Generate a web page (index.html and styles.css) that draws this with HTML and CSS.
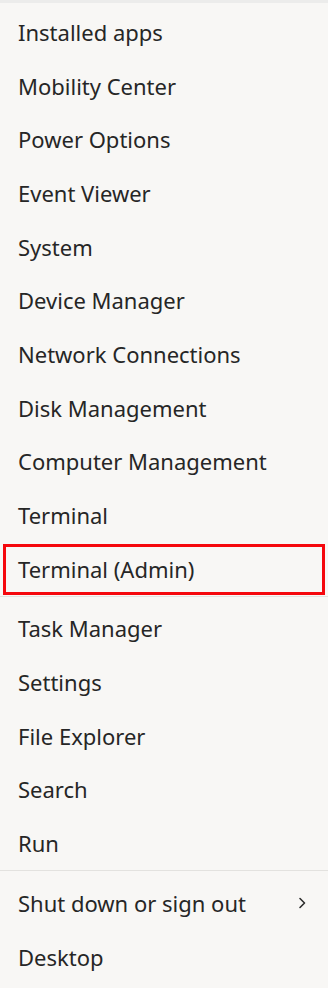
FILE: index.html
```html
<!doctype html>
<html lang="en">
  <head>
    <meta charset="UTF-8" />
    <meta name="viewport" content="width=device-width, initial-scale=1.0" />
    <title>Quick Link menu</title>
    <link rel="stylesheet" href="styles.css">
  </head>
  <body>
    <!-- Меню Win+X -->
    <div class="quick-menu">
      <div class="menu-item">Installed apps</div>
      <div class="menu-item">Mobility Center</div>
      <div class="menu-item">Power Options</div>
      <div class="menu-item">Event Viewer</div>
      <div class="menu-item">System</div>
      <div class="menu-item">Device Manager</div>
      <div class="menu-item">Network Connections</div>
      <div class="menu-item">Disk Management</div>
      <div class="menu-item">Computer Management</div>
      <div class="menu-item">Terminal</div>
      <div class="menu-item menu-item-marked">Terminal (Admin)</div>

      <div class="menu-separator"></div>

      <div class="menu-item">Task Manager</div>
      <div class="menu-item">Settings</div>
      <div class="menu-item">File Explorer</div>
      <div class="menu-item">Search</div>
      <div class="menu-item">Run</div>

      <div class="menu-separator"></div>

      <div class="menu-item menu-item-sub">
        <span>Shut down or sign out</span>
        <svg class="menu-chevron" width="8" height="12" viewBox="0 0 8 12">
          <path d="M2 1.5 L6.5 6 L2 10.5" fill="none" stroke="#2e2e2e" stroke-width="1.6" stroke-linecap="round" stroke-linejoin="round"/>
        </svg>
      </div>
      <div class="menu-item">Desktop</div>
    </div>
  </body>
</html>
```

FILE: styles.css
```css
/* Сброс стилей */
* {
  margin: 0;
  padding: 0;
  box-sizing: border-box;
}

body {
  background: #f8f7f5;
  font-family: "Noto Sans", "Open Sans", sans-serif;
  color: #262626;
}

/* Меню */
.quick-menu {
  width: 328px;
  height: 988px;
  border-top: 3px solid #ececeb;
  padding-top: 2px;
  background: #f8f7f5;
}

.menu-item {
  position: relative;
  height: 53.7px;
  display: flex;
  align-items: center;
  padding-left: 18px;
  padding-right: 22px;
  font-size: 22px;
  white-space: nowrap;
}

.menu-item-sub {
  justify-content: space-between;
}

.menu-chevron {
  display: block;
}

/* Красная рамка вокруг пункта */
.menu-item-marked::after {
  content: '';
  position: absolute;
  top: 2px;
  bottom: 1px;
  left: 3px;
  right: 3px;
  border: 3px solid #f5070d;
}

.menu-separator {
  height: 1px;
  background: #e3e2df;
  margin-bottom: 5px;
}
```
